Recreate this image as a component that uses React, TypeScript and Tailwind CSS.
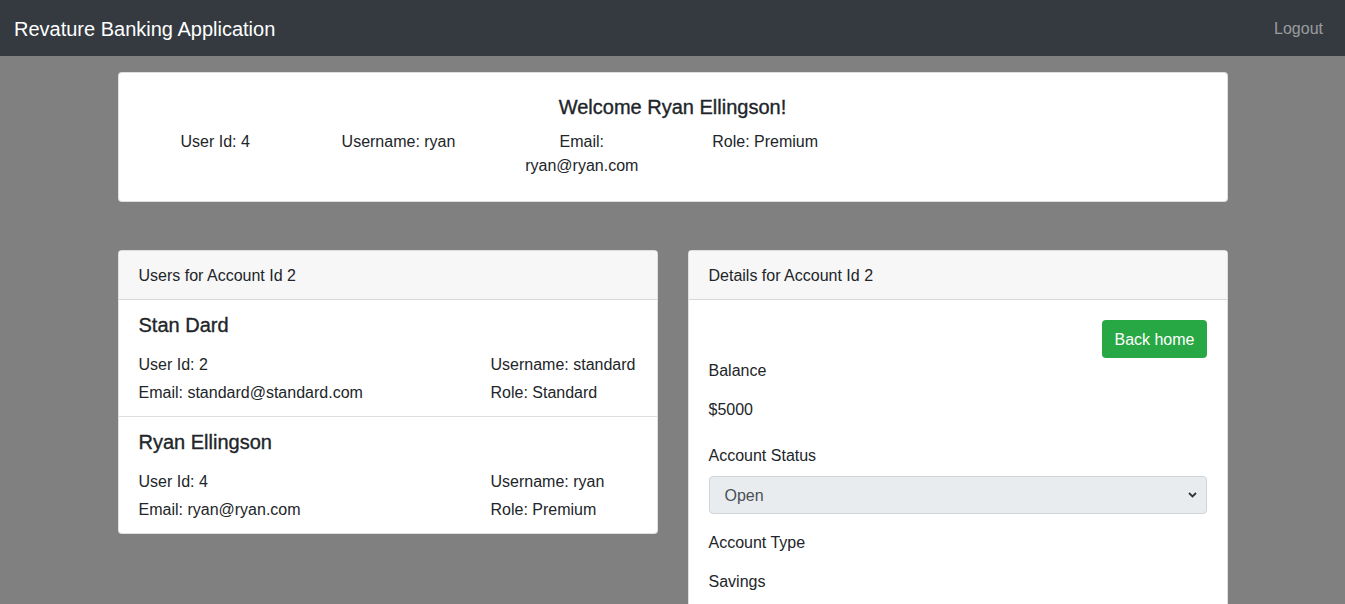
import * as React from 'react';

type Member = {
    name: string;
    id: number;
    username: string;
    email: string;
    role: string;
};

const members: Member[] = [
    { name: 'Stan Dard', id: 2, username: 'standard', email: 'standard@standard.com', role: 'Standard' },
    { name: 'Ryan Ellingson', id: 4, username: 'ryan', email: 'ryan@ryan.com', role: 'Premium' },
];

function CardHeader({ children }: { children: React.ReactNode }) {
    return (
        <div className="border-b border-[rgba(0,0,0,0.125)] bg-[#f7f7f7] px-5 pb-[11px] pt-[13px] leading-6">
            {children}
        </div>
    );
}

function Chevron() {
    return (
        <svg width="9" height="6" viewBox="0 0 9 6" className="text-[#333]">
            <polyline points="1,1 4.5,4.5 8,1" fill="none" stroke="currentColor" strokeWidth="1.8" />
        </svg>
    );
}

export default function App() {
    return (
        <div className="min-h-screen bg-[#808080] font-['Liberation_Sans',Arial,sans-serif] text-base leading-6 text-[#212529]">
            <nav className="flex h-14 items-center justify-between bg-[#343a40] pl-[14px] pr-4">
                <span className="pt-[2px] text-[20px] leading-[30px] text-white">Revature Banking Application</span>
                <a className="pl-2 pr-1.5 pt-[2px] text-[rgba(255,255,255,0.5)]">Logout</a>
            </nav>

            <main className="mx-auto w-[1140px] px-[15px] pb-10">
                <section className="mt-4 rounded border border-[rgba(0,0,0,0.125)] bg-white px-5 pb-[23px] pt-[22px]">
                    <h4 className="text-center text-[20px] font-medium leading-6 [-webkit-text-stroke:0.35px_#212529]">
                        Welcome Ryan Ellingson!
                    </h4>
                    <div className="mx-[-15px] mt-[11px] flex">
                        <div className="w-[183.33px] px-[15px] text-center">User Id: 4</div>
                        <div className="w-[183.33px] px-[15px] text-center">Username: ryan</div>
                        <div className="w-[183.33px] px-[15px] text-center">Email: ryan@ryan.com</div>
                        <div className="w-[183.33px] px-[15px] text-center">Role: Premium</div>
                    </div>
                </section>

                <div className="mt-12 flex items-start gap-[30px]">
                    <section className="w-[540px] overflow-hidden rounded border border-[rgba(0,0,0,0.125)] bg-white">
                        <CardHeader>Users for Account Id 2</CardHeader>
                        {members.map((m, i) => (
                            <div
                                key={m.id}
                                className={
                                    i < members.length - 1
                                        ? 'border-b border-[rgba(0,0,0,0.125)] px-5 pb-[11px] pt-[13px]'
                                        : 'px-5 pb-[11px] pt-[13px]'
                                }
                            >
                                <h5 className="mb-4 text-[20px] font-medium leading-6 [-webkit-text-stroke:0.35px_#212529]">
                                    {m.name}
                                </h5>
                                <div className="grid grid-cols-[352px_1fr] gap-y-1">
                                    <div>User Id: {m.id}</div>
                                    <div>Username: {m.username}</div>
                                    <div>Email: {m.email}</div>
                                    <div>Role: {m.role}</div>
                                </div>
                            </div>
                        ))}
                    </section>

                    <section className="w-[540px] rounded border border-[rgba(0,0,0,0.125)] bg-white">
                        <CardHeader>Details for Account Id 2</CardHeader>
                        <div className="p-5">
                            <div className="flex justify-end">
                                <button
                                    type="button"
                                    className="h-[38px] rounded bg-[#28a745] px-3 pt-[2px] leading-6 text-white"
                                >
                                    Back home
                                </button>
                            </div>
                            <label className="mb-2 block pt-[1px]">Balance</label>
                            <div className="mb-4 pb-[6px] pt-[7px]">$5000</div>

                            <label className="mb-2 block">Account Status</label>
                            <div className="mb-4 flex h-[38px] items-center justify-between rounded border border-[#ced4da] bg-[#e9ecef] pl-[15px] pr-[9px] text-[#495057]">
                                <span className="pt-[2px]">Open</span>
                                <Chevron />
                            </div>

                            <label className="mb-2 block pt-[1px]">Account Type</label>
                            <div className="pb-[6px] pt-[7px]">Savings</div>
                        </div>
                    </section>
                </div>
            </main>
        </div>
    );
}
